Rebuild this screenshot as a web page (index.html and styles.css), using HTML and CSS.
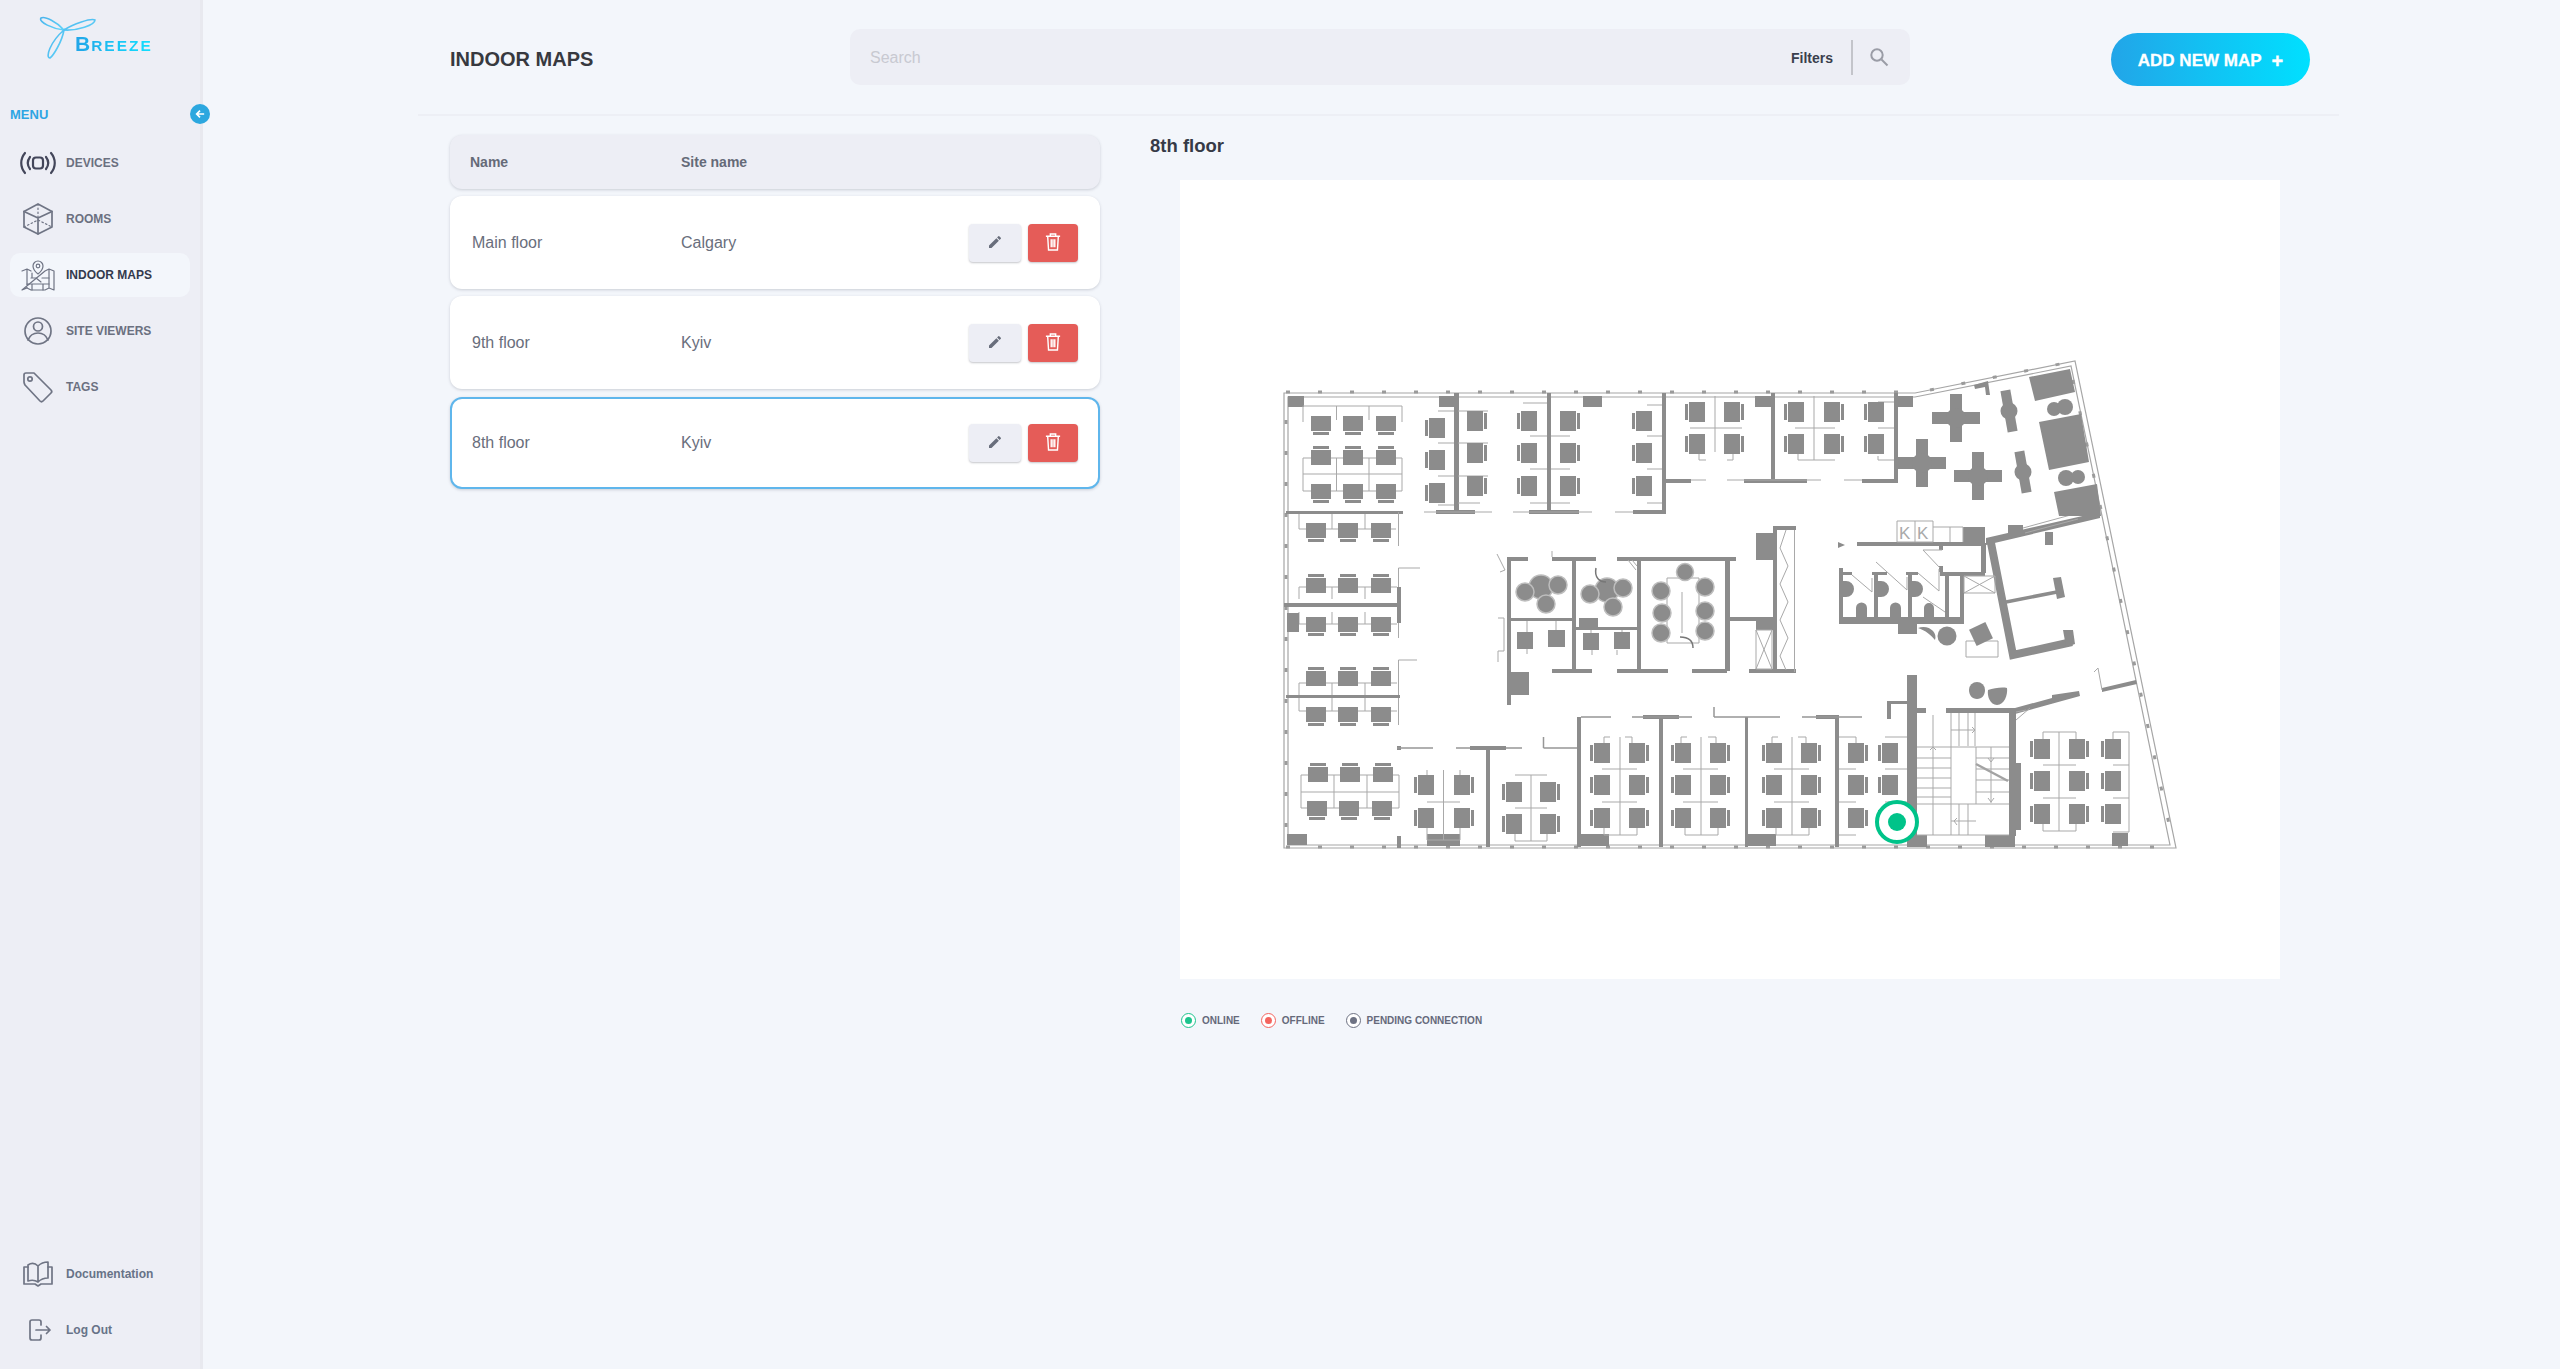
FILE: index.html
```html
<!DOCTYPE html>
<html lang="en">
<head>
<meta charset="utf-8">
<title>Indoor Maps</title>
<link rel="stylesheet" href="styles.css">
</head>
<body>
<div class="app">
  <aside class="sidebar">
    <div class="logo">
      <svg class="logo-mark" viewBox="0 0 60 46" width="60" height="46">
        <defs><linearGradient id="lg" x1="0" y1="0" x2="1" y2="1"><stop offset="0" stop-color="#4cb4ec"/><stop offset="1" stop-color="#5fd4fa"/></linearGradient></defs>
        <path class="petal" d="M25 14 C18 6 6 0 2 2 C-1 6 14 13 25 14 Z"/>
        <path class="petal" d="M25 14 C34 8 52 2 56 4 C56 9 38 15 25 14 Z"/>
        <path class="petal" d="M25 14 C23 26 14 40 11 42 C6 42 11 26 25 14 Z"/>
      </svg>
      <span class="logo-text"><span class="logo-b">B</span>REEZE</span>
    </div>
    <div class="menu-head">
      <span class="menu-label">MENU</span>
      <button class="collapse" type="button" aria-label="Collapse">
        <svg viewBox="0 0 12 12" width="10" height="10"><path class="arrow" d="M11 6H2M6 2 2 6l4 4"/></svg>
      </button>
    </div>
    <nav class="nav">
      <a class="nav-item">
        <svg class="nav-icon" viewBox="0 0 38 24"><g class="ic-dark"><path d="M6 2C1 8 1 16 6 22M11 6C8 10 8 14 11 18M32 2c5 6 5 14 0 20M27 6c3 4 3 8 0 12"/><rect x="14" y="6.500" width="10" height="11" rx="3"/></g></svg>
        <span>DEVICES</span>
      </a>
      <a class="nav-item">
        <svg class="nav-icon" viewBox="0 0 38 34"><g class="ic"><path d="M19 2 33 9.500V25L19 32 5 25V9.500Z"/><path d="M5 9.500 19 16 33 9.500M19 16V32"/><path class="dots" d="M19 2V16M5 25 19 18 33 25"/></g></svg>
        <span>ROOMS</span>
      </a>
      <a class="nav-item active">
        <svg class="nav-icon" viewBox="0 0 38 34"><g class="ic-thin"><path d="M3 13 8 11 12 13M26 13 30 11 35 13V32L30 30 26 32H12L8 30 3 32ZM8 11V30M30 11V30"/><path d="M19 3a5 5 0 0 1 5 5c0 4-5 8-5 8s-5-4-5-8a5 5 0 0 1 5-5Z"/><circle cx="19" cy="8" r="1.800"/><path d="M8 26H30M13 26V32M24 26V32M12 20H17L22 24M13 15V20M23 20H30"/></g></svg>
        <span>INDOOR MAPS</span>
      </a>
      <a class="nav-item">
        <svg class="nav-icon" viewBox="0 0 38 34"><g class="ic"><circle cx="19" cy="17" r="13"/><circle cx="19" cy="12.500" r="4.500"/><path d="M9 26c2-5 6-7 10-7s8 2 10 7"/></g></svg>
        <span>SITE VIEWERS</span>
      </a>
      <a class="nav-item">
        <svg class="nav-icon" viewBox="0 0 38 34"><g class="ic"><path d="M7 3H15L32 20C33 21 33 22 32 23L24 31C23 32 22 32 21 31L6 15C5.500 14 5 13 5 12V5C5 4 6 3 7 3Z"/><circle cx="11" cy="9" r="2.200"/></g></svg>
        <span>TAGS</span>
      </a>
    </nav>
    <div class="nav-bottom">
      <a class="nav-item doc">
        <svg class="nav-icon" viewBox="0 0 38 34"><g class="ic"><path d="M9 10H5V27H16L19 29 22 27H33V10H29"/><path d="M9 8C12 6 16 6 19 9V25C16 23 12 23 9 24ZM19 9C21 7 25 5 29 5V21C25 21 21 23 19 25"/></g></svg>
        <span>Documentation</span>
      </a>
      <a class="nav-item doc">
        <svg class="nav-icon" viewBox="0 0 38 34"><g class="ic"><path d="M22 12V9C22 8 21 7 20 7H13C12 7 11 8 11 9V25C11 26 12 27 13 27H20C21 27 22 26 22 25V22"/><path d="M17 17H31M27.500 13.500 31 17 27.500 20.500"/></g></svg>
        <span>Log Out</span>
      </a>
    </div>
  </aside>

  <main class="main">
    <header class="topbar">
      <h1 class="title">INDOOR MAPS</h1>
      <div class="search">
        <span class="placeholder">Search</span>
        <span class="filters">Filters</span>
        <span class="divider"></span>
        <svg class="search-icon" viewBox="0 0 20 20" width="20" height="20"><circle cx="8" cy="8" r="5.700"/><path d="M12.500 12.500 18.500 18.500"/></svg>
      </div>
      <button class="add" type="button"><span>ADD NEW MAP</span><span class="plus">+</span></button>
    </header>

    <div class="content">
      <section class="list">
        <div class="row head"><span class="col-name">Name</span><span class="col-site">Site name</span></div>
        <div class="row item">
          <span class="col-name">Main floor</span><span class="col-site">Calgary</span>
          <span class="actions">
            <button class="btn edit" type="button"><svg viewBox="0 0 24 24" width="16" height="16"><path d="M3 17.250V21h3.750L17.810 9.940l-3.750-3.750L3 17.250zM20.710 7.040a1 1 0 0 0 0-1.410l-2.340-2.340a1 1 0 0 0-1.410 0l-1.830 1.830 3.750 3.750 1.830-1.830z"/></svg></button>
            <button class="btn del" type="button"><svg viewBox="0 0 18 22" width="16" height="20"><path d="M1 4.500H17M6 4.500V2H12V4.500M3 4.500 4 20H14L15 4.500M7 8V17M9 8V17M11 8V17"/></svg></button>
          </span>
        </div>
        <div class="row item">
          <span class="col-name">9th floor</span><span class="col-site">Kyiv</span>
          <span class="actions">
            <button class="btn edit" type="button"><svg viewBox="0 0 24 24" width="16" height="16"><path d="M3 17.250V21h3.750L17.810 9.940l-3.750-3.750L3 17.250zM20.710 7.040a1 1 0 0 0 0-1.410l-2.340-2.340a1 1 0 0 0-1.410 0l-1.830 1.830 3.750 3.750 1.830-1.830z"/></svg></button>
            <button class="btn del" type="button"><svg viewBox="0 0 18 22" width="16" height="20"><path d="M1 4.500H17M6 4.500V2H12V4.500M3 4.500 4 20H14L15 4.500M7 8V17M9 8V17M11 8V17"/></svg></button>
          </span>
        </div>
        <div class="row item selected">
          <span class="col-name">8th floor</span><span class="col-site">Kyiv</span>
          <span class="actions">
            <button class="btn edit" type="button"><svg viewBox="0 0 24 24" width="16" height="16"><path d="M3 17.250V21h3.750L17.810 9.940l-3.750-3.750L3 17.250zM20.710 7.040a1 1 0 0 0 0-1.410l-2.340-2.340a1 1 0 0 0-1.410 0l-1.830 1.830 3.750 3.750 1.830-1.830z"/></svg></button>
            <button class="btn del" type="button"><svg viewBox="0 0 18 22" width="16" height="20"><path d="M1 4.500H17M6 4.500V2H12V4.500M3 4.500 4 20H14L15 4.500M7 8V17M9 8V17M11 8V17"/></svg></button>
          </span>
        </div>
      </section>

      <section class="detail">
        <h2 class="floor-title">8th floor</h2>
        <div class="map">
          <svg class="plan" viewBox="1180 180 1100 799" width="1100" height="799">
            <defs>
              <g id="cd"><rect class="w" width="20" height="15"/><rect class="w" x="2" y="16" width="16" height="3"/></g>
              <g id="cu"><rect class="w" y="5" width="20" height="15"/><rect class="w" x="2" y="1" width="16" height="3"/></g>
              <g id="cl"><rect class="w" width="16" height="20"/><rect class="w" x="-4" y="2" width="3" height="16"/></g>
              <g id="cr"><rect class="w" width="16" height="20"/><rect class="w" x="17" y="2" width="3" height="16"/></g>
              <g id="col-l"><use href="#cl"/><use href="#cl" y="32"/><use href="#cl" y="65"/></g>
              <g id="col-r"><use href="#cr"/><use href="#cr" y="32"/><use href="#cr" y="65"/></g>
              <g id="cross"><rect class="w" x="-24" y="-6" width="48" height="12"/><rect class="w" x="-6" y="-24" width="12" height="48"/><circle class="w" r="10"/></g>
            </defs>

            <!-- shell -->
            <path class="shell" d="M1284 393H1915L2075 361 2176 848H1284Z"/>
            <path class="shell" d="M1288 397H1915L2071 366 2170 845H1288Z"/>
            <path class="ticks" d="M1286 392H1915"/>
            <path class="ticks" d="M1286 847H2170"/>
            <path class="ticks-v" d="M1286 420V848"/>
            <path class="ticks" d="M2073 380 2172 838"/>
            <path class="ticks" d="M1930 390 2070 362"/>

            <!-- corner blocks and top walls -->
            <rect class="w" x="1288" y="396" width="16" height="11"/>
            <rect class="w" x="1439" y="396" width="19" height="11"/>
            <rect class="w" x="1583" y="396" width="19" height="11"/>
            <rect class="w" x="1755" y="396" width="19" height="11"/>
            <rect class="w" x="1894" y="396" width="19" height="11"/>
            <rect class="w" x="1454" y="393" width="5" height="120"/>
            <rect class="w" x="1547" y="393" width="4" height="120"/>
            <rect class="w" x="1662" y="393" width="4" height="121"/>
            <rect class="w" x="1771" y="393" width="4" height="88"/>
            <rect class="w" x="1894" y="393" width="4" height="89"/>
            <rect class="w" x="1286" y="511" width="117" height="3"/>
            <rect class="w" x="1436" y="510" width="39" height="4"/>
            <rect class="w" x="1529" y="510" width="50" height="4"/>
            <rect class="w" x="1633" y="510" width="33" height="4"/>
            <rect class="w" x="1666" y="479" width="25" height="4"/>
            <rect class="w" x="1744" y="479" width="63" height="4"/>
            <rect class="w" x="1862" y="479" width="36" height="4"/>
            <path class="t" d="M1424 512H1492M1513 512H1592M1615 512H1633M1691 480H1706M1727 480H1821M1844 480H1862"/>

            <!-- top left open desks -->
            <path class="t" d="M1303 422V406H1402V422M1336.500 406V420M1369 406V420M1303 458V491H1402V458H1303M1303 474H1402M1336.500 458V491M1369 458V491"/>
            <use href="#cd" x="1311" y="416"/><use href="#cd" x="1343" y="416"/><use href="#cd" x="1376" y="416"/>
            <use href="#cu" x="1311" y="445"/><use href="#cu" x="1343" y="445"/><use href="#cu" x="1376" y="445"/>
            <use href="#cd" x="1311" y="484"/><use href="#cd" x="1343" y="484"/><use href="#cd" x="1376" y="484"/>

            <!-- rooms across the top -->
            <path class="t" d="M1438 411H1454M1438 443H1454M1438 476H1454M1438 505H1454M1458 411H1488M1458 443H1488M1458 476H1488M1458 503H1480M1523 403H1547M1530 436H1547M1530 469H1547M1530 503H1547M1551 436H1570M1551 469H1570M1551 503H1570M1647 405H1662M1647 436H1662M1647 469H1662M1647 503H1662"/>
            <use href="#col-l" x="1429" y="418"/>
            <use href="#col-r" x="1467" y="411"/>
            <use href="#col-l" x="1521" y="411"/>
            <use href="#col-r" x="1560" y="411"/>
            <use href="#col-l" x="1636" y="411"/>
            <path class="t" d="M1715 396V452M1690 428H1742M1699 454V460H1706M1733 454V460H1727M1814 396V460M1795 428H1835M1798 454V460H1835M1878 402H1894M1878 428H1894M1878 456V460H1894"/>
            <use href="#cl" x="1689" y="402"/><use href="#cl" x="1689" y="434"/>
            <use href="#cr" x="1724" y="402"/><use href="#cr" x="1724" y="434"/>
            <use href="#cl" x="1788" y="402"/><use href="#cl" x="1788" y="434"/>
            <use href="#cr" x="1824" y="402"/><use href="#cr" x="1824" y="434"/>
            <use href="#cl" x="1868" y="402"/><use href="#cl" x="1868" y="434"/>

            <!-- west desks -->
            <path class="t" d="M1299 514V529H1365V514M1332 514V529M1365 529H1396M1398.500 512V546M1299 599V587H1397M1332 587V599M1365 587V599M1299 612V624H1397M1332 612V624M1365 612V624M1398.500 568V638M1398.500 568H1420M1299 695V683H1397M1332 683V695M1365 683V695M1299 697V711H1397M1332 697V711M1365 697V711M1398.500 660V725M1398.500 660H1417"/>
            <use href="#cd" x="1306" y="523"/><use href="#cd" x="1338" y="523"/><use href="#cd" x="1371" y="523"/>
            <use href="#cu" x="1306" y="573"/><use href="#cu" x="1338" y="573"/><use href="#cu" x="1371" y="573"/>
            <rect class="w" x="1284" y="603" width="116" height="4"/>
            <rect class="w" x="1397" y="587" width="4" height="36"/>
            <rect class="w" x="1287" y="613" width="12" height="19"/>
            <use href="#cd" x="1306" y="617"/><use href="#cd" x="1338" y="617"/><use href="#cd" x="1371" y="617"/>
            <use href="#cu" x="1306" y="666"/><use href="#cu" x="1338" y="666"/><use href="#cu" x="1371" y="666"/>
            <rect class="w" x="1286" y="695" width="114" height="3"/>
            <use href="#cd" x="1306" y="707"/><use href="#cd" x="1338" y="707"/><use href="#cd" x="1371" y="707"/>

            <!-- south west desks -->
            <path class="t" d="M1301 775H1399V808H1301ZM1301 792H1399M1334 775V808M1367 775V808"/>
            <use href="#cu" x="1308" y="762"/><use href="#cu" x="1340" y="762"/><use href="#cu" x="1373" y="762"/>
            <use href="#cd" x="1307" y="801"/><use href="#cd" x="1339" y="801"/><use href="#cd" x="1372" y="801"/>
            <rect class="w" x="1397" y="746" width="4" height="4"/>
            <rect class="w" x="1287" y="834" width="20" height="11"/>
            <rect class="w" x="1397" y="836" width="4" height="12"/>
            <path class="t2" d="M1397 748H1433M1456 748H1522M1543.500 748H1577M1543.500 737V748"/>
            <rect class="w" x="1470" y="746" width="36" height="4"/>
            <rect class="w" x="1486" y="748" width="4" height="99"/>
            <rect class="w" x="1427" y="834" width="33" height="12"/>
            <path class="t" d="M1443.500 770V840M1427 770V775M1460 770V775M1427 802H1460M1427 828V840H1460V828M1531 775V841M1515 775H1547M1515 808H1547M1515 834V841H1547V834"/>
            <use href="#cl" x="1418" y="775"/><use href="#cl" x="1418" y="808"/>
            <use href="#cr" x="1454" y="775"/><use href="#cr" x="1454" y="808"/>
            <use href="#cl" x="1506" y="782"/><use href="#cl" x="1506" y="814"/>
            <use href="#cr" x="1540" y="782"/><use href="#cr" x="1540" y="814"/>

            <!-- south rooms -->
            <rect class="w" x="1577" y="717" width="4" height="130"/>
            <rect class="w" x="1659" y="717" width="4" height="130"/>
            <rect class="w" x="1745" y="717" width="3" height="130"/>
            <rect class="w" x="1835" y="717" width="4" height="130"/>
            <rect class="w" x="1577" y="834" width="32" height="12"/>
            <rect class="w" x="1745" y="834" width="31" height="12"/>
            <rect class="w" x="1643" y="715" width="36" height="4"/>
            <rect class="w" x="1816" y="715" width="23" height="4"/>
            <path class="t2" d="M1581 717H1611M1632 717H1692M1714 717H1780M1714 707V717M1802 717H1862"/>
            <path class="t" d="M1604 743V737H1610M1625 737H1632V743M1620 737V835M1602 769H1637M1602 802H1637M1604 828V835H1637V828M1681 743V737H1687M1708 737H1716V743M1701 737V835M1683 769H1718M1683 802H1718M1685 828V835H1718V828M1772 743V737H1778M1798 737H1806V743M1792 737V835M1774 769H1809M1774 802H1809M1776 828V835H1809V828M1839 737H1856V743M1839 769H1856M1839 802H1856M1839 835H1856M1885 737H1907M1885 769H1907M1885 802H1907"/>
            <use href="#col-l" x="1594" y="743"/><use href="#col-r" x="1629" y="743"/>
            <use href="#col-l" x="1675" y="743"/><use href="#col-r" x="1710" y="743"/>
            <use href="#col-l" x="1766" y="743"/><use href="#col-r" x="1801" y="743"/>
            <use href="#col-r" x="1848" y="743"/><use href="#col-l" x="1882" y="743"/>

            <!-- central rooms -->
            <rect class="w" x="1507" y="557" width="4" height="148"/>
            <rect class="w" x="1507" y="557" width="21" height="4"/>
            <rect class="w" x="1552" y="557" width="44" height="4"/>
            <rect class="w" x="1617" y="557" width="119" height="4"/>
            <rect class="w" x="1572" y="557" width="4" height="114"/>
            <rect class="w" x="1637" y="557" width="4" height="114"/>
            <rect class="w" x="1725" y="557" width="5" height="114"/>
            <rect class="w" x="1509" y="618" width="65" height="3"/>
            <rect class="w" x="1576" y="627" width="61" height="3"/>
            <rect class="w" x="1579" y="618" width="19" height="9"/>
            <rect class="w" x="1552" y="669" width="40" height="4"/>
            <rect class="w" x="1617" y="669" width="51" height="4"/>
            <rect class="w" x="1692" y="669" width="35" height="4"/>
            <rect class="w" x="1749" y="669" width="47" height="4"/>
            <rect class="w" x="1511" y="672" width="18" height="23"/>
            <rect class="w" x="1729" y="617" width="27" height="4"/>
            <rect class="w" x="1756" y="617" width="20" height="13"/>
            <rect class="w" x="1773" y="526" width="4" height="146"/>
            <rect class="w" x="1773" y="526" width="23" height="4"/>
            <rect class="w" x="1756" y="533" width="17" height="27"/>
            <path class="t" d="M1794.500 530V672M1756 630H1772V669H1756ZM1756 630 1772 669M1772 630 1756 669M1786 530 1780 548 1788 566 1780 584 1788 602 1780 620 1788 638 1780 656 1786 670M1497 554 1505 570 1500 572M1552 551V557M1498 618H1504V651H1498V662"/>

            <circle class="seat" cx="1541" cy="587" r="12"/><circle class="seat" cx="1525" cy="592" r="9"/><circle class="seat" cx="1558" cy="585" r="9"/><circle class="seat" cx="1546" cy="604" r="9"/>
            <circle class="seat" cx="1607" cy="590" r="12"/><circle class="seat" cx="1590" cy="594" r="9"/><circle class="seat" cx="1623" cy="588" r="9"/><circle class="seat" cx="1613" cy="607" r="9"/>
            <path class="arc" d="M1596 568C1594 578 1600 582 1606 582"/>
            <path class="t" d="M1667 578H1699V643H1667ZM1682 592V633M1628 560 1636 570M1632 560 1637 566"/>
            <circle class="seat" cx="1685" cy="572" r="8.500"/><circle class="seat" cx="1661" cy="591" r="9"/><circle class="seat" cx="1662" cy="613" r="9"/><circle class="seat" cx="1661" cy="633" r="9"/><circle class="seat" cx="1705" cy="587" r="9"/><circle class="seat" cx="1705" cy="611" r="9"/><circle class="seat" cx="1705" cy="631" r="9"/>
            <path class="arc" d="M1680 637C1690 637 1693 642 1693 648"/>
            <rect class="w" x="1517" y="632" width="16" height="17"/><rect class="w" x="1548" y="630" width="17" height="17"/><rect class="w" x="1583" y="633" width="16" height="17"/><rect class="w" x="1614" y="632" width="16" height="17"/>
            <path class="t" d="M1527 621V632M1556 621V630M1591 630V633M1622 630V632M1527 649V654M1592 650V655M1617 650V655"/>

            <!-- kitchen and wc -->
            <rect class="w" x="1857" y="542" width="128" height="4"/>
            <rect class="w" x="1963" y="527" width="22" height="17"/>
            <path class="t" d="M1897 521H1933V542H1897ZM1915 521V542M1933 527H1963V542M1950 527V542"/>
            <text class="k" x="1899" y="539">K</text><text class="k" x="1917" y="539">K</text>
            <path class="w" d="M1838 542 1845 545 1838 548Z"/>
            <path class="w" d="M1986 538 2100 512 2100 518 1986 545Z"/>
            <path class="w" d="M2008 525H2023V536H2008ZM2045 532H2053V545H2045Z"/>
            <path class="t" d="M2023 528 2078 513M2025 533 2078 519"/>
            <path class="wall" d="M1991 543 2013 655 2072 642"/>
            <path class="w" d="M2063 630H2073L2075 644 2066 647Z"/>
            <path class="wall-thin" d="M2006 602 2057 592"/>
            <path class="w" d="M2053 578 2061 577 2065 597 2057 599Z"/>
            <!-- washrooms -->
            <rect class="w" x="1839" y="617" width="125" height="7"/>
            <rect class="w" x="1839" y="568" width="4" height="56"/>
            <rect class="w" x="1874" y="573" width="4" height="47"/>
            <rect class="w" x="1908" y="573" width="4" height="47"/>
            <rect class="w" x="1945" y="573" width="4" height="47"/>
            <rect class="w" x="1960" y="575" width="4" height="49"/>
            <rect class="w" x="1839" y="572" width="13" height="3"/>
            <rect class="w" x="1872" y="572" width="15" height="3"/>
            <rect class="w" x="1906" y="572" width="12" height="3"/>
            <rect class="w" x="1945" y="573" width="15" height="3"/>
            <path class="w" d="M1843 581h3a8 8 0 0 1 8 8 8 8 0 0 1-8 8h-3ZM1878 581h3a8 8 0 0 1 8 8 8 8 0 0 1-8 8h-3ZM1912 581h3a8 8 0 0 1 8 8 8 8 0 0 1-8 8h-3Z"/>
            <path class="w" d="M1856 618v-10a5.500 5.500 0 0 1 11 0v10ZM1890 618v-10a5.500 5.500 0 0 1 11 0v10ZM1924 618v-10a5 5 0 0 1 10 0v10Z"/>
            <rect class="w" x="1898" y="623" width="19" height="11"/>
            <rect class="w" x="1981" y="543" width="5" height="30"/>
            <rect class="w" x="1940" y="572" width="45" height="4"/>
            <rect class="w" x="1939" y="566" width="4" height="6"/>
            <rect class="w" x="1939" y="546" width="4" height="4"/>
            <path class="t" d="M1964 576H1995V593H1964ZM1964 576 1995 593M1995 576 1964 593M1852 575 1872 592V578M1876 562 1907 590V577M1918 573 1939 591V569M1923 550H1942M1923 550 1940 568M1923 597 1945 612"/>
            <circle class="w" cx="1947" cy="636" r="9.500"/>
            <path class="w" d="M1918 628C1928 624 1938 632 1935 640 1932 636 1925 630 1918 628Z"/>
            <path class="t" d="M1966 641H1998V657H1966Z"/>
            <rect class="w" x="1972" y="625" width="18" height="18" transform="rotate(-25 1981 634)"/>

            <!-- cafe -->
            <use href="#cross" x="1956" y="418"/><use href="#cross" x="1922" y="463"/><use href="#cross" x="1978" y="476"/>
            <rect class="w" x="1897" y="458" width="10" height="10"/>
            <path class="w" d="M1974 385 1988 381 1990 395H1986L1985 387 1975 389Z"/>
            <rect class="w" x="2004" y="390" width="10" height="42" transform="rotate(-10 2009 411)"/><circle class="w" cx="2009" cy="411" r="8.500"/>
            <rect class="w" x="2018" y="451" width="10" height="42" transform="rotate(-10 2023 472)"/><circle class="w" cx="2023" cy="472" r="8.500"/>
            <path class="w" d="M2029 377 2070 369 2075 392 2035 401Z"/>
            <path class="w" d="M2039 422 2081 414 2089 462 2049 470Z"/>
            <path class="w" d="M2054 492 2097 484 2101 516 2059 516Z"/>
            <circle class="w" cx="2054" cy="409" r="7"/><circle class="w" cx="2065" cy="407" r="8"/>
            <circle class="w" cx="2066" cy="478" r="8"/><circle class="w" cx="2078" cy="477" r="7"/>

            <!-- core -->
            <rect class="w" x="1907" y="675" width="10" height="172"/>
            <rect class="w" x="1917" y="708" width="9" height="5"/>
            <rect class="w" x="1887" y="701" width="20" height="3"/>
            <rect class="w" x="1887" y="701" width="4" height="18"/>
            <rect class="w" x="1907" y="835" width="20" height="12"/>
            <rect class="w" x="1946" y="708" width="69" height="5"/>
            <rect class="w" x="2009" y="708" width="7" height="128"/>
            <rect class="w" x="2009" y="763" width="12" height="67"/>
            <rect class="w" x="1985" y="835" width="30" height="12"/>
            <path class="t" d="M1917 747H2009M1917 758H1951M1917 768H1951M1917 778H1951M1917 788H1951M1917 797H1951M1917 804H2009M1933 715V835M1951 713V835H1917M1975 746V713M1959 713V746M1968 713V746M1951 730H1975L1972 727M1975 730 1972 733M1951 835H2009M1976 747V804M1976 758H2009M1976 769H2009M1976 780H2009M1976 792H2009M1959 804V835M1968 804V835M1951 821H1976M1954 821 1957 818M1954 821 1957 825M1933 747 1930 750M1933 747 1936 750M1991 747V803M1988 758 1991 762 1994 758M1988 798 1991 802 1994 798"/>
            <path class="thick" d="M1976 764 2008 781"/>
            <path class="w" d="M1969 690a8 8 0 0 1 16 0c0 5-3 9-8 9s-8-4-8-9Z"/>
            <path class="w" d="M1988 690c6-2 14-3 19-2 1 7-3 17-10 17s-10-9-9-15Z"/>
            <path class="w" d="M2015 708 2052 698 2052 695 2079 691 2080 696 2015 714Z"/>
            <path class="w" d="M2102 688 2136 680 2137 684 2102 692Z"/>
            <path class="t" d="M2102 690 2098 668 2094 672M2016 720 2030 708M2016 712 2026 710"/>

            <!-- east desks -->
            <path class="t" d="M2043 739V732H2076V739M2059 732V831M2043 765H2076M2043 798H2076M2043 824V831H2076V824M2113 739V732H2129V832H2113M2113 765H2129M2113 798H2129"/>
            <use href="#col-l" x="2034" y="739"/><use href="#col-r" x="2069" y="739"/>
            <use href="#col-l" x="2105" y="739"/>
            <rect class="w" x="2112" y="833" width="16" height="13"/>

            <!-- device marker -->
            <circle class="marker-ring" cx="1897" cy="822" r="20"/>
            <circle class="marker-dot" cx="1897" cy="822" r="9"/>
          </svg>
        </div>
        <ul class="legend">
          <li class="legend-item"><span class="dot online"></span>ONLINE</li>
          <li class="legend-item"><span class="dot offline"></span>OFFLINE</li>
          <li class="legend-item"><span class="dot pending"></span>PENDING CONNECTION</li>
        </ul>
      </section>
    </div>
  </main>
</div>
</body>
</html>
```

FILE: styles.css
```css
* { box-sizing: border-box; }
html, body { margin: 0; height: 100%; }
body {
  background: #f3f6fb;
  font-family: "Liberation Sans", Arial, sans-serif;
  color: #3a3f4d;
  overflow: hidden;
}
.app { display: flex; height: 100vh; }

/* sidebar */
.sidebar {
  position: relative;
  flex: 0 0 203px;
  display: flex;
  flex-direction: column;
  background: #edeef5;
  border-right: 3px solid #e8e9ef;
}
.logo { position: relative; height: 100px; }
.logo-mark { position: absolute; left: 39px; top: 16px; }
.petal { fill: none; stroke: url(#lg); stroke-width: 1.6; }
.logo-text {
  position: absolute;
  left: 75px;
  top: 33px;
  font-size: 15.500px;
  font-weight: 700;
  letter-spacing: 2px;
  line-height: 22px;
  background: linear-gradient(90deg, #22a5e8, #12e0ff);
  -webkit-background-clip: text;
  background-clip: text;
  color: transparent;
}
.logo-b { font-size: 21px; letter-spacing: 1px; }
.menu-head { position: relative; height: 28px; display: flex; align-items: center; padding-left: 10px; }
.menu-label { font-size: 13px; font-weight: 700; color: #2ea5e3; }
.collapse {
  position: absolute;
  right: -10px;
  top: 4px;
  width: 20px;
  height: 20px;
  border: 0;
  padding: 0;
  border-radius: 50%;
  background: #2ca7df;
  display: flex;
  align-items: center;
  justify-content: center;
  z-index: 2;
}
.arrow { fill: none; stroke: #fff; stroke-width: 2; }
.nav { display: flex; flex-direction: column; gap: 12px; margin-top: 13px; padding: 0 10px; }
.nav-item {
  display: flex;
  align-items: center;
  height: 44px;
  border-radius: 10px;
  font-size: 12px;
  font-weight: 700;
  color: #6b7080;
  gap: 9px;
  padding-left: 9px;
}
.nav-item.active { background: #f3f6fb; color: #333a4d; }
.nav-item.doc { color: #677388; }
.nav-icon { width: 38px; height: 34px; flex: none; }
.ic, .ic-dark, .ic-thin { fill: none; stroke: #6f7484; stroke-width: 1.7; stroke-linejoin: round; stroke-linecap: round; }
.ic-dark { stroke: #43465a; stroke-width: 2.2; }
.ic-thin { stroke-width: 1.2; }
.dots { stroke-dasharray: 1.500 2.500; stroke-width: 1.2; }
.nav-bottom { margin-top: auto; display: flex; flex-direction: column; gap: 12px; padding: 0 10px 17px; }

/* topbar */
.main { flex: 1; min-width: 0; padding: 0 221px 0 215px; }
.topbar {
  display: flex;
  align-items: center;
  height: 116px;
  border-bottom: 2px solid #edeff5;
  padding: 0 29px 0 32px;
}
.title { margin: 0; width: 400px; font-size: 20px; font-weight: 700; color: #37393f; line-height: 1; position: relative; top: 2px; }
.search {
  width: 1060px;
  height: 56px;
  flex: none;
  display: flex;
  align-items: center;
  padding: 0 21px 0 20px;
  border-radius: 10px;
  background: #edeef5;
}
.placeholder { font-size: 16px; color: #c8c9d1; flex: 1; position: relative; top: 1px; }
.filters { font-size: 14px; font-weight: 700; color: #3a3f4d; position: relative; left: 2px; top: 1px; }
.divider { width: 2px; height: 35px; margin: 0 16px 0 20px; background: #c3c4ca; }
.search-icon { fill: none; stroke: #9a9ca6; stroke-width: 2; }
.add {
  margin-left: 201px;
  margin-top: 4px;
  width: 199px;
  height: 53px;
  flex: none;
  border: 0;
  border-radius: 27px;
  padding: 3px 0 0;
  display: flex;
  align-items: center;
  justify-content: center;
  gap: 10px;
  font: 700 17px "Liberation Sans", Arial, sans-serif;
  -webkit-text-stroke: .3px #fff;
  color: #fff;
  background: linear-gradient(90deg, #22a5e8, #00e0ff);
}
.plus { font-size: 20px; line-height: 1; }

/* list */
.content { display: flex; padding: 19px 0 0 32px; gap: 50px; }
.list { flex: 0 0 650px; display: flex; flex-direction: column; gap: 7px; }
.row { position: relative; display: flex; align-items: center; border-radius: 12px; box-shadow: 0 1px 3px rgba(60, 64, 80, .22); }
.head { height: 54px; background: #edeef5; font-size: 14px; font-weight: 700; color: #656a78; padding-left: 20px; }
.head .col-name { width: 211px; }
.item { height: 93px; background: #fff; font-size: 16px; color: #696e7c; padding: 0 22px 0 22px; }
.item .col-name { width: 209px; }
.item .col-site { flex: 1; }
.selected { border: 2px solid #5fb6ec; padding: 0 20px 0 20px; margin-top: 1px; height: 92px; }
.actions { display: flex; gap: 7px; }
.btn {
  height: 38px;
  border: 0;
  padding: 0 0 2px;
  border-radius: 4px;
  display: flex;
  align-items: center;
  justify-content: center;
  box-shadow: 0 1px 2px rgba(60, 64, 80, .3);
}
.edit { width: 52px; background: #edeef5; }
.edit svg { fill: #696e7c; }
.del { width: 50px; background: #e55c58; }
.del svg { fill: none; stroke: #fff; stroke-width: 1.6; }

/* detail */
.detail { flex: 1; min-width: 0; }
.floor-title { margin: 0; height: 45px; font-size: 18.500px; line-height: 22px; font-weight: 700; color: #363a46; }
.map { margin: 0 0 0 30px; width: 1100px; height: 799px; background: #fff; }
.plan { display: block; }
.w { fill: #8c8c8c; }
.wall { fill: none; stroke: #8c8c8c; stroke-width: 8; stroke-linejoin: miter; }
.wall-thin { fill: none; stroke: #8c8c8c; stroke-width: 3.500; }
.seat { fill: #8c8c8c; stroke: #bdbdbd; stroke-width: 1.5; }
.t { fill: none; stroke: #a9a9a9; stroke-width: 1; }
.t2 { fill: none; stroke: #979797; stroke-width: 1.5; }
.thick { fill: none; stroke: #a3a3a3; stroke-width: 2.500; }
.arc { fill: none; stroke: #777; stroke-width: 1.500; }
.shell { fill: none; stroke: #a6a6a6; stroke-width: 1.200; }
.ticks { fill: none; stroke: #9b9b9b; stroke-width: 3; stroke-dasharray: 4 28; }
.ticks-v { fill: none; stroke: #9b9b9b; stroke-width: 3; stroke-dasharray: 4 27; }
.k { font-size: 17px; font-weight: 400; fill: #a9a9a9; font-family: "Liberation Sans", Arial, sans-serif; }
.marker-ring { fill: #fff; stroke: #00c389; stroke-width: 4; }
.marker-dot { fill: #00c389; }

/* legend */
.legend { display: flex; gap: 21px; margin: 34px 0 0 31px; padding: 0; list-style: none; }
.legend-item { display: flex; align-items: center; gap: 6px; font-size: 10px; font-weight: 700; color: #65697a; }
.dot { position: relative; width: 15px; height: 15px; border: 1.500px solid; border-radius: 50%; background: #fff; display: flex; align-items: center; justify-content: center; }
.dot::after { content: ""; width: 7px; height: 7px; border-radius: 50%; background: currentColor; }
.online { color: #1cc48d; }
.offline { color: #f4645e; }
.pending { color: #6d7283; }
```
